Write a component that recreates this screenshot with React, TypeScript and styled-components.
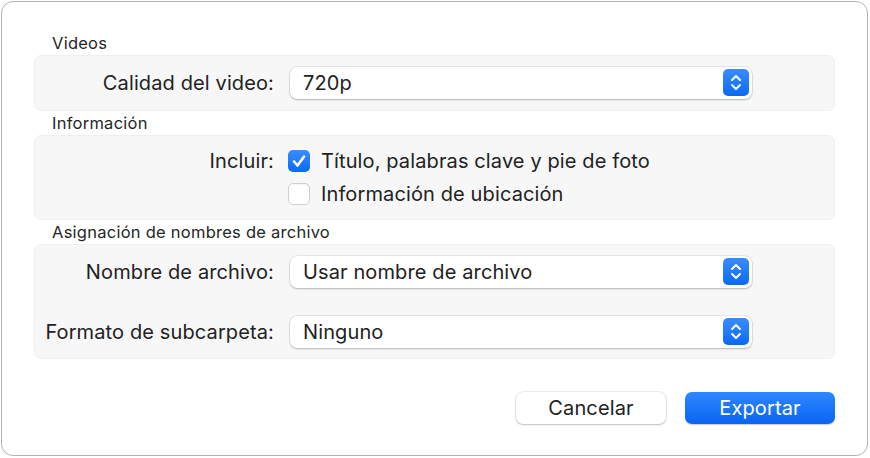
import React from 'react';
import styled, { createGlobalStyle } from 'styled-components';

const GlobalStyle = createGlobalStyle`
  html, body {
    margin: 0;
    padding: 0;
    background: #ffffff;
  }
  body {
    font-family: Inter, "Liberation Sans", Arial, sans-serif;
    color: #222222;
    -webkit-font-smoothing: antialiased;
  }
`;

const Window = styled.div`
  box-sizing: border-box;
  margin: 1px 0 0 1px;
  width: 867px;
  height: 455px;
  border: 1px solid #b4b4b4;
  border-radius: 12px;
  background: #ffffff;
  padding: 29px 32px 0 32px;
  display: flex;
  flex-direction: column;
`;

const SectionTitle = styled.div`
  height: 24px;
  line-height: 24px;
  padding-left: 18px;
  font-size: 16.5px;
  letter-spacing: 0.25px;
  color: #262626;
`;

const Group = styled.div<{ $height: number; $pad: number }>`
  box-sizing: border-box;
  height: ${(p) => p.$height}px;
  padding: ${(p) => p.$pad}px 0;
  background: #f7f7f7;
  border: 1px solid #efefef;
  border-radius: 7px;
  display: flex;
  flex-direction: column;
  justify-content: center;
`;

const Row = styled.div<{ $height: number; $gap?: number }>`
  display: grid;
  grid-template-columns: 239px 1fr;
  column-gap: 16px;
  align-items: center;
  height: ${(p) => p.$height}px;
  margin-top: ${(p) => p.$gap ?? 0}px;
`;

const Label = styled.div`
  text-align: right;
  font-size: 20px;
  letter-spacing: 0.12px;
  white-space: nowrap;
`;

const Select = styled.div`
  box-sizing: border-box;
  position: relative;
  width: 462px;
  height: 32px;
  background: #ffffff;
  border-radius: 7px;
  box-shadow: 0 0 0 0.5px rgba(0, 0, 0, 0.12), 0 1px 2px rgba(0, 0, 0, 0.22);
  display: flex;
  align-items: center;
  padding-left: 13px;
  font-size: 20px;
  letter-spacing: 0.12px;
`;

const Stepper = styled.div`
  position: absolute;
  right: 3px;
  top: 2px;
  width: 26px;
  height: 27px;
  border-radius: 5px;
  background: linear-gradient(#3a8dff, #0a69f4);
  display: flex;
  align-items: center;
  justify-content: center;
`;

const CheckRow = styled.label`
  display: flex;
  align-items: center;
  gap: 11px;
  margin-left: -2px;
  font-size: 20px;
  letter-spacing: 0.12px;
`;

const Box = styled.span<{ $checked?: boolean }>`
  box-sizing: border-box;
  width: 22px;
  height: 22px;
  border-radius: 5px;
  display: flex;
  align-items: center;
  justify-content: center;
  background: ${(p) => (p.$checked ? 'linear-gradient(#3a8dff, #0a69f4)' : '#ffffff')};
  border: ${(p) => (p.$checked ? 'none' : '1px solid #cfcfcf')};
  box-shadow: ${(p) => (p.$checked ? 'none' : 'inset 0 1px 1px rgba(0,0,0,0.04)')};
`;

const Footer = styled.div`
  display: flex;
  justify-content: flex-end;
  gap: 19px;
  margin-top: 33px;
`;

const Button = styled.button<{ $primary?: boolean }>`
  width: 150px;
  height: 32px;
  border-radius: 7px;
  border: none;
  font-family: inherit;
  font-size: 20px;
  letter-spacing: 0.12px;
  color: ${(p) => (p.$primary ? '#ffffff' : '#222222')};
  background: ${(p) => (p.$primary ? 'linear-gradient(#2f88ff, #0864f2)' : '#ffffff')};
  box-shadow: ${(p) =>
    p.$primary
      ? '0 0.5px 1px rgba(0,0,0,0.2)'
      : '0 0 0 0.5px rgba(0,0,0,0.14), 0 1px 2px rgba(0,0,0,0.2)'};
  cursor: pointer;
`;

const Chevrons = () => (
  <svg width="26" height="27" viewBox="0 0 26 27" fill="none">
    <path d="M9 11 L13 7 L17 11" stroke="#fff" strokeWidth="2" strokeLinecap="round" strokeLinejoin="round" />
    <path d="M9 16 L13 20 L17 16" stroke="#fff" strokeWidth="2" strokeLinecap="round" strokeLinejoin="round" />
  </svg>
);

const Check = () => (
  <svg width="22" height="22" viewBox="0 0 22 22" fill="none">
    <path d="M6 11.5 L9.5 15.5 L16 6.5" stroke="#fff" strokeWidth="2.6" strokeLinecap="round" strokeLinejoin="round" />
  </svg>
);

const PopUp = ({ value }: { value: string }) => (
  <Select>
    {value}
    <Stepper>
      <Chevrons />
    </Stepper>
  </Select>
);

export default function App() {
  return (
    <>
      <GlobalStyle />
      <Window>
        <SectionTitle>Videos</SectionTitle>
        <Group $height={56} $pad={0}>
          <Row $height={32}>
            <Label>Calidad del video:</Label>
            <PopUp value="720p" />
          </Row>
        </Group>

        <SectionTitle>Información</SectionTitle>
        <Group $height={85} $pad={8}>
          <Row $height={34}>
            <Label>Incluir:</Label>
            <CheckRow>
              <Box $checked>
                <Check />
              </Box>
              Título, palabras clave y pie de foto
            </CheckRow>
          </Row>
          <Row $height={34}>
            <span />
            <CheckRow>
              <Box />
              Información de ubicación
            </CheckRow>
          </Row>
        </Group>

        <SectionTitle>Asignación de nombres de archivo</SectionTitle>
        <Group $height={115} $pad={11}>
          <Row $height={32}>
            <Label>Nombre de archivo:</Label>
            <PopUp value="Usar nombre de archivo" />
          </Row>
          <Row $height={32} $gap={28}>
            <Label>Formato de subcarpeta:</Label>
            <PopUp value="Ninguno" />
          </Row>
        </Group>

        <Footer>
          <Button>Cancelar</Button>
          <Button $primary>Exportar</Button>
        </Footer>
      </Window>
    </>
  );
}
